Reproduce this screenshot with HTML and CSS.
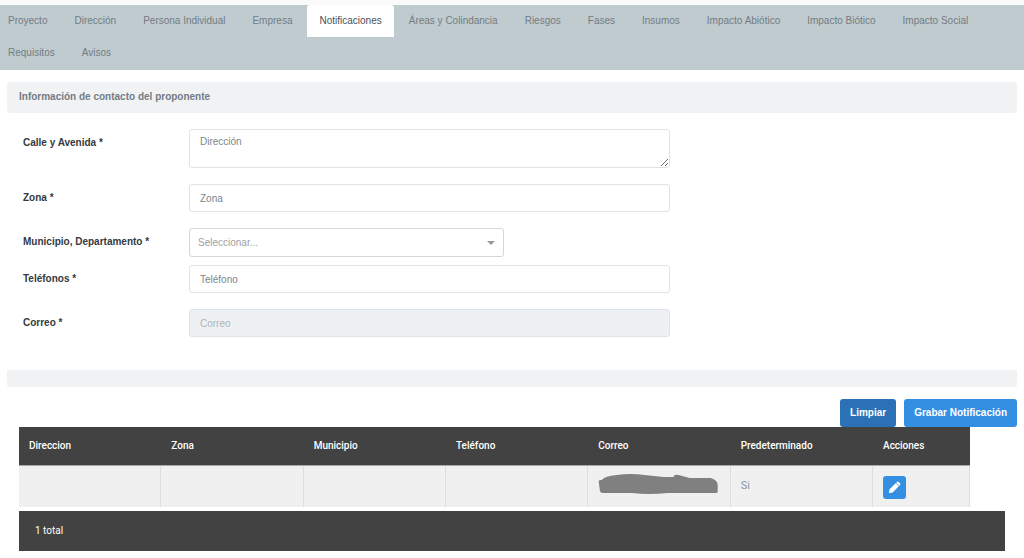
FILE: index.html
```html
<!DOCTYPE html>
<html lang="es">
<head>
<meta charset="utf-8">
<meta name="viewport" content="width=device-width, initial-scale=1">
<title>Notificaciones</title>
<link rel="stylesheet" href="styles.css">
</head>
<body>
<nav class="tabs">
  <a class="tab" href="#">Proyecto</a>
  <a class="tab" href="#">Dirección</a>
  <a class="tab" href="#">Persona Individual</a>
  <a class="tab" href="#">Empresa</a>
  <a class="tab tab-active" href="#" aria-current="page">Notificaciones</a>
  <a class="tab" href="#">Áreas y Colindancia</a>
  <a class="tab" href="#">Riesgos</a>
  <a class="tab" href="#">Fases</a>
  <a class="tab" href="#">Insumos</a>
  <a class="tab" href="#">Impacto Abiótico</a>
  <a class="tab" href="#">Impacto Biótico</a>
  <a class="tab" href="#">Impacto Social</a>
  <a class="tab" href="#">Requisitos</a>
  <a class="tab" href="#">Avisos</a>
</nav>
<main class="content">
  <h1 class="card-header">Información de contacto del proponente</h1>
  <form class="form" id="contacto">
    <div class="field">
      <label class="label" for="calle">Calle y Avenida *</label>
      <textarea class="control control-area" id="calle" placeholder="Dirección"></textarea>
    </div>
    <div class="field">
      <label class="label" for="zona">Zona *</label>
      <input class="control" id="zona" type="text" placeholder="Zona">
    </div>
    <div class="field field-tight">
      <label class="label" for="municipio">Municipio, Departamento *</label>
      <div class="select-wrap">
        <select class="control control-select" id="municipio"><option>Seleccionar...</option></select>
      </div>
    </div>
    <div class="field">
      <label class="label" for="telefono">Teléfonos *</label>
      <input class="control" id="telefono" type="tel" placeholder="Teléfono">
    </div>
    <div class="field">
      <label class="label" for="correo">Correo *</label>
      <input class="control" id="correo" type="email" placeholder="Correo" disabled>
    </div>
  </form>
  <div class="card-footer"></div>
  <div class="actions">
    <button class="btn btn-dark" type="reset" form="contacto">Limpiar</button>
    <button class="btn" type="submit" form="contacto">Grabar Notificación</button>
  </div>
  <div class="grid">
    <table class="table">
      <thead>
        <tr><th>Direccion</th><th>Zona</th><th>Municipio</th><th>Teléfono</th><th>Correo</th><th>Predeterminado</th><th class="col-actions">Acciones</th></tr>
      </thead>
      <tbody>
        <tr>
          <td></td><td></td><td></td><td></td>
          <td>
            <svg class="redaction" viewBox="0 0 120 20" aria-hidden="true"><path d="M0 5Q0 4 3 4Q6 0 18 -1Q32 -3 46 -1L65 1H75Q75 -2 80 -1L91 2L112 2Q119 4 119 9V16Q119 17 117 17H69Q50 19 33 17H4Q1 17 1 13Z"/></svg>
          </td>
          <td>Si</td>
          <td>
            <button class="icon-btn" type="button" aria-label="Editar">
              <svg class="icon" viewBox="0 0 14 14" aria-hidden="true"><path d="M1 12.500Q.8 13.200 1.500 13L5 12.300L11.600 5.700L8.300 2.400L1.700 9ZM8.700 2L9.700 1Q10.600 .2 11.500 1L13 2.500Q13.800 3.400 13 4.300L12 5.300Z"/></svg>
            </button>
          </td>
        </tr>
      </tbody>
    </table>
    <div class="total">1 total</div>
  </div>
</main>
</body>
</html>
```

FILE: styles.css
```css
* { box-sizing: border-box; }

body {
  margin: 0;
  background: #fff;
  color: #343a40;
  font: 10px/16px "Liberation Sans", Arial, sans-serif;
}

.tabs {
  display: flex;
  flex-wrap: wrap;
  column-gap: 3px;
  padding-bottom: 1px;
  border-top: 5px solid #fafafa;
  background: #c0cbcf;
}

.tab {
  padding: 8px 12px;
  border-radius: 3px 3px 0 0;
  color: #737c83;
  text-decoration: none;
}

.tab:first-child,
.tab:nth-child(13) { padding-left: 8px; }

.tab-active {
  background: #fff;
  color: #495057;
}

.content { padding: 12px 7px 7px; }

.card-header {
  margin: 0;
  padding: 7px 12px 8px;
  border-radius: 3px;
  background: #f0f2f4;
  color: #737c85;
  font-size: 10px;
  font-weight: 700;
  line-height: 16px;
}

.form {
  display: flex;
  flex-direction: column;
  gap: 16px;
  padding: 16px;
}

.field {
  display: grid;
  grid-template-columns: 166px minmax(0, 481px);
  align-items: start;
}

.field-tight { margin-bottom: -8px; }

.label {
  padding-top: 6px;
  font-weight: 700;
}

.control {
  display: block;
  width: 100%;
  height: 28px;
  padding: 5px 10px;
  border: 1px solid #dfe3e8;
  border-radius: 3px;
  background: #fff;
  color: #737c85;
  font: inherit;
}

.control::placeholder {
  color: #7d858c;
  opacity: 1;
}

.control:disabled { background: #edf1f4; }

.control:disabled::placeholder { color: #adb3b8; }

.control-area {
  height: 39px;
  padding-top: 4px;
  resize: vertical;
}

.select-wrap {
  display: grid;
  max-width: 315px;
}

.select-wrap > *,
.select-wrap::after { grid-area: 1 / 1; }

.select-wrap::after {
  content: "";
  align-self: center;
  justify-self: end;
  margin-right: 9px;
  border: 4px solid transparent;
  border-top: 4px solid #999;
  border-bottom: 0;
  pointer-events: none;
}

.control-select {
  height: 29px;
  padding: 5px 8px;
  border-color: #d4d6d8;
  color: #a0a0a0;
  appearance: none;
}

.card-footer {
  height: 17px;
  margin-top: 17px;
  border-radius: 0 0 3px 3px;
  background: #f0f2f4;
}

.actions {
  display: flex;
  justify-content: flex-end;
  gap: 8px;
  padding-top: 12px;
}

.btn {
  padding: 6px 10px;
  border: 0;
  border-radius: 3px;
  background: #348fe2;
  color: #fff;
  font: 700 10px/16px "Liberation Sans", Arial, sans-serif;
}

.btn-dark { background: #2a72b5; }

.grid {
  padding: 0 12px;
  font-family: Roboto, sans-serif;
}

.table {
  width: calc(100% - 35px);
  border-collapse: separate;
  border-spacing: 0;
  table-layout: fixed;
}

.table th {
  height: 39px;
  padding: 0 10px;
  border-bottom: 1px solid #a5a9ad;
  background: #424242;
  color: #fff;
  font-weight: 500;
  text-align: left;
}

.table .col-actions { width: 97px; }

.table td {
  height: 41px;
  padding: 10px 10px 6px;
  border-right: 1px solid #dcdfe1;
  background: #f0f0f0;
  color: #8a94a3;
  font-size: 11px;
  line-height: 20px;
  vertical-align: top;
}

.redaction {
  display: block;
  width: 100%;
  height: 20px;
  overflow: visible;
  fill: #808080;
}

.icon-btn {
  display: grid;
  place-items: center;
  width: 23px;
  height: 23px;
  padding: 0;
  border: 0;
  border-radius: 3px;
  background: #348fe2;
}

.icon {
  width: 13px;
  height: 13px;
  fill: #fff;
}

.total {
  margin-top: 4px;
  padding: 12px 16px;
  background: #424242;
  color: #fff;
}
```
